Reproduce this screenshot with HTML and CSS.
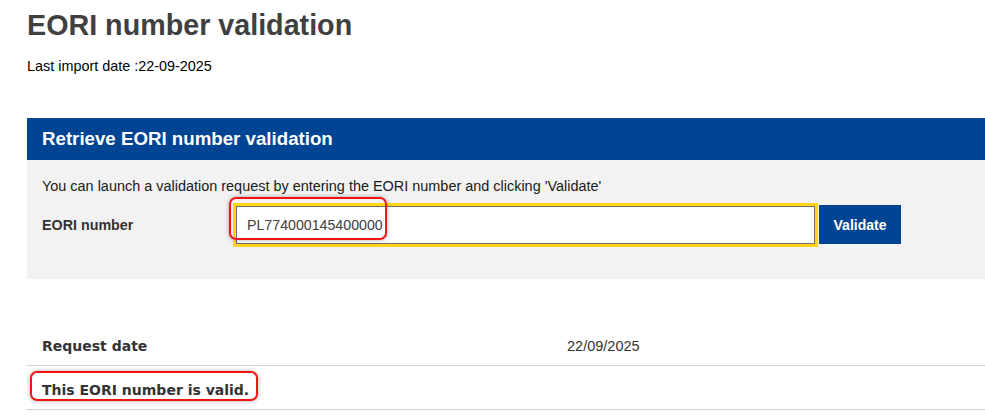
FILE: index.html
```html
<!DOCTYPE html>
<html lang="en">
<head>
<meta charset="utf-8">
<title>EORI number validation</title>
<link rel="stylesheet" href="styles.css">
</head>
<body>
<main class="page">
  <h1 class="title">EORI number validation</h1>
  <p class="import-date">Last import date :22-09-2025</p>

  <section class="panel">
    <h2 class="panel-head">Retrieve EORI number validation</h2>
    <div class="panel-body">
      <p class="intro">You can launch a validation request by entering the EORI number and clicking 'Validate'</p>
      <div class="form-row">
        <label class="label" for="eori">EORI number</label>
        <div class="field">
          <input id="eori" class="input" type="text" value="PL774000145400000">
          <button class="btn" type="button">Validate</button>
          <span class="mark mark-input"></span>
        </div>
      </div>
    </div>
  </section>

  <div class="results">
    <div class="row">
      <div class="cell key">Request date</div>
      <div class="cell val">22/09/2025</div>
    </div>
    <div class="row">
      <div class="cell key">This EORI number is valid.</div>
      <span class="mark mark-valid"></span>
    </div>
  </div>
</main>
</body>
</html>
```

FILE: styles.css
```css
html, body {
  margin: 0;
  padding: 0;
  background: #ffffff;
  overflow: hidden;
}

.page {
  width: 1000px;
  padding-left: 27px;
  font-family: "Liberation Sans", Arial, sans-serif;
  color: #000;
}

.title {
  margin: 8px 0 0;
  font-size: 28.7px;
  line-height: 34px;
  font-weight: bold;
  color: #404040;
}

.import-date {
  margin: 15px 0 0;
  font-size: 14.4px;
  line-height: 18px;
}

.panel {
  margin-top: 43px;
}

.panel-head {
  margin: 0;
  height: 42px;
  line-height: 42px;
  padding-left: 15px;
  background: #004494;
  color: #ffffff;
  font-size: 18.7px;
  font-weight: bold;
}

.panel-body {
  background: #f2f2f2;
  height: 119px;
  box-sizing: border-box;
  padding: 17px 15px 0;
}

.intro {
  margin: 0;
  font-size: 14.45px;
  line-height: 18px;
  color: #1a1a1a;
}

.form-row {
  display: flex;
  align-items: center;
  margin-top: 10px;
}

.label {
  width: 194px;
  font-size: 14.3px;
  font-weight: bold;
  color: #333;
}

.field {
  position: relative;
  display: flex;
  align-items: center;
}

.input {
  box-sizing: border-box;
  width: 579px;
  height: 38px;
  margin: 0;
  padding: 0 10px;
  border: 1px solid #707070;
  outline: 3px solid #ffd617;
  background: #fff;
  font-family: "Liberation Sans", Arial, sans-serif;
  font-size: 14.2px;
  color: #404040;
}

.btn {
  margin: 0 0 0 4px;
  width: 82px;
  height: 39px;
  border: 0;
  padding: 0;
  background: #004494;
  color: #fff;
  font-family: "Liberation Sans", Arial, sans-serif;
  font-size: 14px;
  font-weight: bold;
}

.mark {
  position: absolute;
  box-sizing: border-box;
  border: 2px solid #f01414;
  border-radius: 7px;
  box-shadow: 0 0 4px rgba(0, 0, 0, 0.35);
}

.mark-input {
  left: -7px;
  top: -8px;
  width: 158px;
  height: 43px;
}

.results {
  margin-top: 43px;
}

.row {
  position: relative;
  display: flex;
  align-items: baseline;
  height: 44px;
  box-sizing: border-box;
  padding-top: 14px;
  border-bottom: 1px solid #cfcfcf;
}

.cell {
  line-height: 20px;
}

.key {
  width: 525px;
  padding-left: 15px;
  font-family: "DejaVu Sans", Verdana, sans-serif;
  font-weight: bold;
  font-size: 14px;
  color: #333;
}

.val {
  font-family: "Liberation Sans", Arial, sans-serif;
  font-size: 14.5px;
  color: #333;
}

.mark-valid {
  left: 3px;
  top: 5px;
  width: 228px;
  height: 30px;
}
```
